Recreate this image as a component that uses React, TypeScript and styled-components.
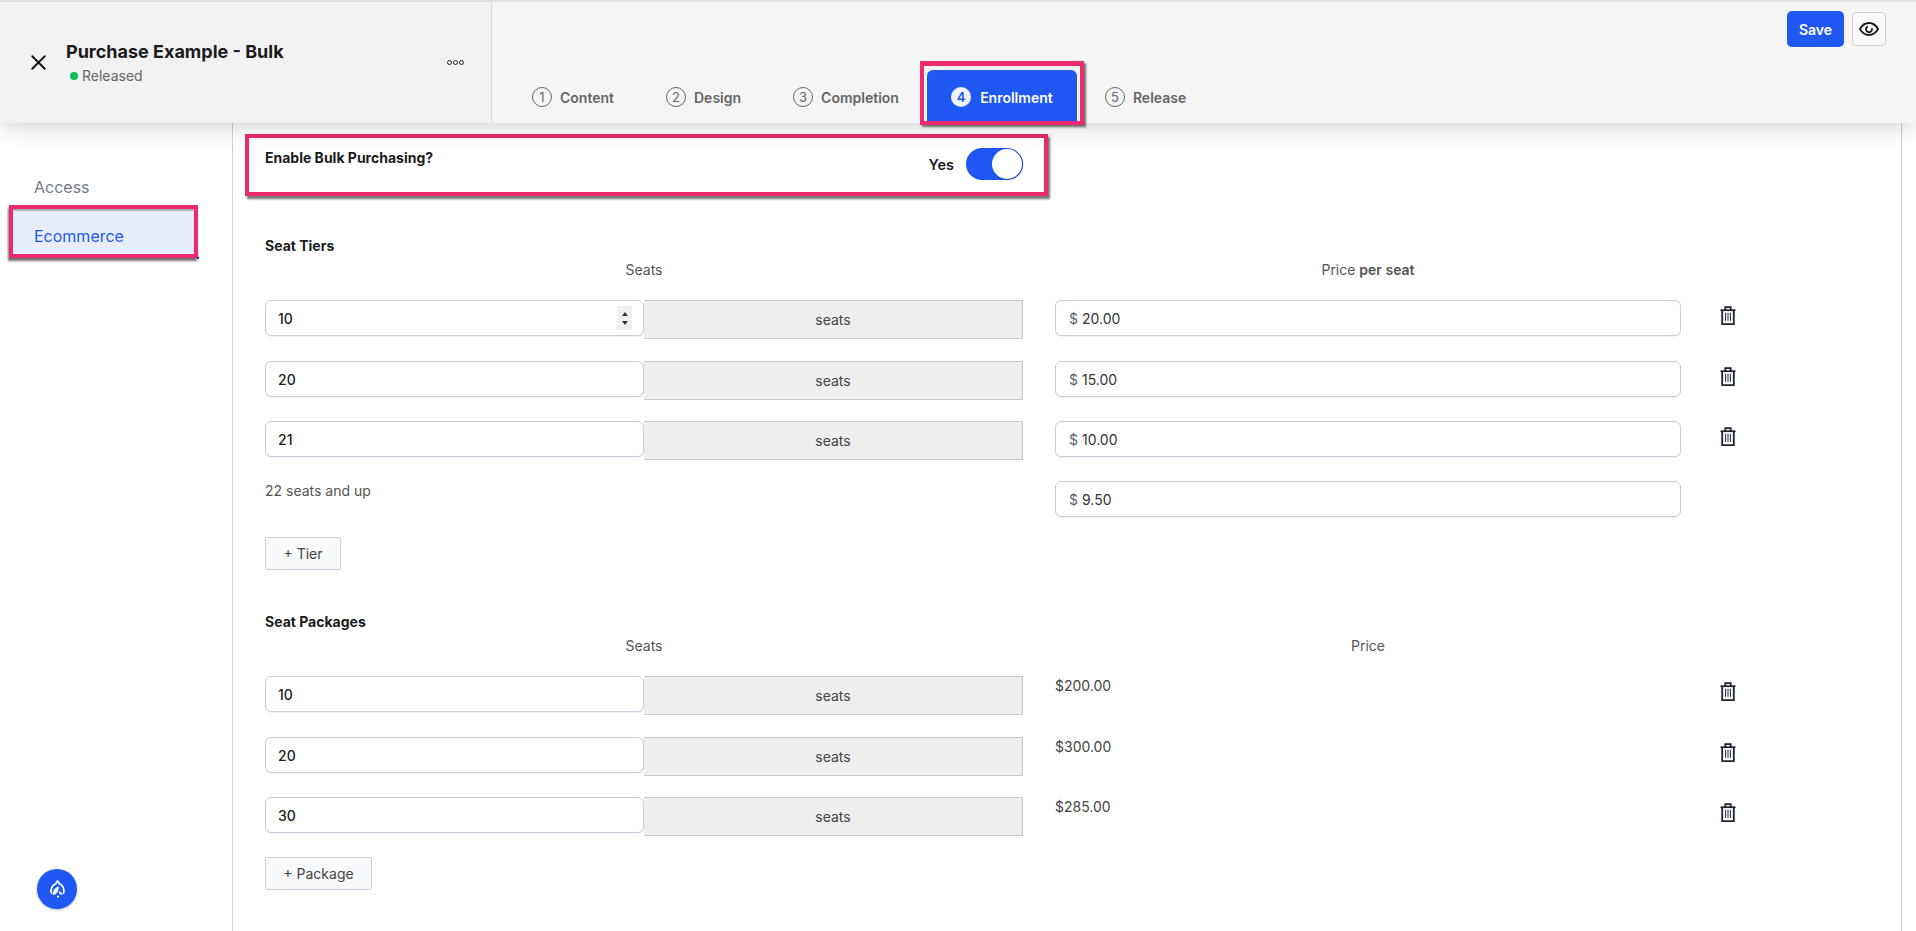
import React from 'react'
import styled, { createGlobalStyle } from 'styled-components'
import { X } from 'lucide-react'

const GlobalStyle = createGlobalStyle`
  html, body {
    margin: 0;
    padding: 0;
    height: 931px;
    overflow: hidden;
    background: #fff;
    font-family: Inter, "Liberation Sans", sans-serif;
    color: #1b1b1b;
  }
  * { box-sizing: border-box; }
`

const PINK = '#ec2a6e'
const BLUE = '#1f57f2'

const Page = styled.div`
  height: 931px;
  overflow: hidden;
  display: flex;
  flex-direction: column;
`

const Header = styled.header`
  position: relative;
  z-index: 2;
  flex: 0 0 123px;
  display: flex;
  background: #f5f5f5;
  border-top: 2px solid #e2e2e2;
  box-shadow: 0 2px 22px rgba(0, 0, 0, 0.2);
`

const TitleBlock = styled.div`
  flex: 0 0 492px;
  display: flex;
  align-items: center;
  padding: 0 26px 0 26px;
  background: #f2f2f2;
  border-right: 1px solid #d6d6d6;
`

const CloseButton = styled.div`
  display: flex;
  width: 25px;
  color: #111;
  margin-right: 15px;
`

const TitleText = styled.div`
  flex: 1;
  padding-top: 1px;
`

const CourseName = styled.div`
  font-size: 18px;
  font-weight: 700;
  line-height: 24px;
`

const Status = styled.div`
  display: flex;
  align-items: center;
  gap: 4px;
  margin: 2px 0 0 4px;
  font-size: 14px;
  line-height: 20px;
  color: #666;
`

const StatusDot = styled.span`
  width: 8px;
  height: 8px;
  border-radius: 50%;
  background: #0fbf5b;
`

const MoreDots = styled.div`
  display: flex;
  gap: 1px;
  margin-right: 1px;
`

const MoreDot = styled.span`
  width: 5px;
  height: 5px;
  border-radius: 50%;
  border: 1px solid #222;
`

const TabArea = styled.div`
  flex: 1;
  display: flex;
  justify-content: space-between;
  padding: 9px 30px 0 0;
`

const Tabs = styled.nav`
  display: flex;
  align-items: flex-end;
  padding: 0 0 0 40px;
`

const Tab = styled.div<{ $gap: number }>`
  display: flex;
  align-items: center;
  gap: 8px;
  height: 52px;
  margin-right: ${(p) => p.$gap}px;
  font-size: 14px;
  font-weight: 600;
  color: #666;
`

const ActiveFrame = styled.div<{ $gap: number }>`
  width: 164px;
  height: 64px;
  margin-right: ${(p) => p.$gap}px;
  margin-bottom: -2px;
  padding: 4px 3px 0 3px;
  display: flex;
  background: #f5f5f5;
  border: 4px solid ${PINK};
  border-top-width: 5px;
  box-shadow: 2px 2px 2px rgba(0, 0, 0, 0.55);
`

const ActiveTab = styled.div`
  flex: 1;
  display: flex;
  align-items: center;
  justify-content: center;
  gap: 9px;
  padding-top: 3px;
  background: ${BLUE};
  border-radius: 6px 6px 0 0;
  font-size: 14px;
  font-weight: 600;
  color: #fff;
`

const StepCircle = styled.span<{ $active?: boolean }>`
  display: flex;
  align-items: center;
  justify-content: center;
  width: 20px;
  height: 20px;
  border-radius: 50%;
  font-size: 13px;
  font-weight: 400;
  border: 1.5px solid #666;
  ${(p) => p.$active && `
    border: 0;
    background: #eef3ff;
    color: ${BLUE};
    font-weight: 600;
  `}
`

const HeaderActions = styled.div`
  display: flex;
  align-items: flex-start;
  gap: 8px;
`

const SaveButton = styled.div`
  width: 57px;
  height: 36px;
  display: flex;
  align-items: center;
  justify-content: center;
  background: ${BLUE};
  border-radius: 5px;
  color: #fff;
  font-size: 14px;
  font-weight: 600;
`

const EyeButton = styled.div`
  width: 34px;
  height: 34px;
  margin-top: 1px;
  display: flex;
  align-items: center;
  justify-content: center;
  background: #f9f9f9;
  border: 1px solid #cfcfcf;
  border-radius: 4px;
  color: #1b1b1b;
`

const Body = styled.div`
  flex: 1;
  display: flex;
  min-height: 0;
`

const Sidebar = styled.aside`
  position: relative;
  flex: 0 0 233px;
  border-right: 1px solid #cfcfcf;
  padding: 46px 34px 0 9px;
`

const SideLink = styled.div`
  display: flex;
  align-items: center;
  height: 36px;
  padding-left: 25px;
  font-size: 16px;
  color: #737a86;
`

const SideLinkActive = styled.div`
  position: relative;
  display: flex;
  align-items: center;
  height: 53px;
  padding: 8px 0 0 21px;
  font-size: 16px;
  color: ${BLUE};
  background: #e7eefb;
  border: 4px solid ${PINK};
  box-shadow: -1px 3px 2px rgba(0, 0, 0, 0.55), inset 0 2px 1px rgba(0, 0, 0, 0.25);

  &::after {
    content: '';
    position: absolute;
    right: -5px;
    bottom: -5px;
    width: 2px;
    height: 2px;
    background: #12308f;
  }
`

const HelpFab = styled.div`
  position: absolute;
  left: 37px;
  bottom: 22px;
  width: 40px;
  height: 40px;
  border-radius: 50%;
  background: ${BLUE};
  display: flex;
  align-items: center;
  justify-content: center;
  box-shadow: 0 1px 3px rgba(0, 0, 0, 0.25);
`

const Main = styled.main`
  flex: 0 0 1613px;
  border-right: 1px solid #cfcfcf;
  padding: 11px 165px 0 32px;
`

const ToggleRow = styled.div`
  width: 803px;
  height: 62px;
  margin-left: -20px;
  padding: 10px 21px 0 16px;
  display: flex;
  justify-content: space-between;
  background: #fff;
  border: 4px solid ${PINK};
  box-shadow: 2px 3px 2px rgba(0, 0, 0, 0.55);
`

const ToggleLabel = styled.div`
  font-size: 14px;
  font-weight: 700;
  line-height: 20px;
`

const ToggleGroup = styled.div`
  display: flex;
  align-items: center;
  gap: 12px;
  height: 32px;
  font-size: 14.5px;
  font-weight: 600;
`

const Switch = styled.div`
  width: 57px;
  height: 32px;
  border-radius: 16px;
  background: ${BLUE};
  display: flex;
  justify-content: flex-end;
  padding: 1px;
`

const SwitchKnob = styled.span`
  width: 30px;
  height: 30px;
  border-radius: 50%;
  background: #fff;
  box-shadow: 1px 1px 2px rgba(0, 0, 0, 0.3);
`

const SectionTitle = styled.div<{ $top: number }>`
  margin-top: ${(p) => p.$top}px;
  font-size: 14px;
  font-weight: 700;
  line-height: 20px;
`

const Grid = styled.div`
  display: grid;
  grid-template-columns: 758px 32px 626px 1fr;
  align-items: start;
`

const ColumnHead = styled.div<{ $price?: boolean }>`
  grid-column: ${(p) => (p.$price ? 3 : 1)};
  grid-row: 1;
  font-size: 14px;
  line-height: 20px;
  color: #555;
  text-align: center;
  height: 44px;
  padding-top: 4px;

  b {
    font-weight: 600;
  }
`

const SeatGroup = styled.div`
  grid-column: 1;
  display: flex;
  align-items: flex-start;
`

const InputShell = styled.div<{ $wide?: boolean }>`
  position: relative;
  display: flex;
  align-items: center;
  height: 36px;
  width: ${(p) => (p.$wide ? '100%' : '379px')};
  padding: 0 12px;
  background: #fff;
  border: 1px solid #c9cdd6;
  border-radius: 6px;
  box-shadow: 0 1px 1px rgba(0, 0, 0, 0.05);
  font-size: 14px;
  font-weight: 500;
  color: #1b1b1b;
`

const Dollar = styled.span`
  color: #5d6470;
  font-weight: 400;
  margin: 0 4px 0 1px;
`

const PriceValue = styled.span`
  font-weight: 400;
  color: #333;
`

const Spinner = styled.span`
  position: absolute;
  right: 11px;
  top: 5px;
  width: 15px;
  height: 24px;
  background: #efefef;
  display: flex;
  flex-direction: column;
  align-items: center;
  justify-content: center;
  gap: 5px;
`

const SpinArrow = styled.span<{ $down?: boolean }>`
  width: 0;
  height: 0;
  border-left: 3px solid transparent;
  border-right: 3px solid transparent;
  ${(p) => (p.$down ? 'border-top: 4px solid #333;' : 'border-bottom: 4px solid #333;')}
`

const Addon = styled.div`
  flex: 1;
  height: 39px;
  display: flex;
  align-items: center;
  justify-content: center;
  background: #efefef;
  border: 1px solid #c9c9c9;
  border-left: 0;
  font-size: 14px;
  color: #444;
`

const PriceCell = styled.div`
  grid-column: 3;
`

const PlainPrice = styled.div`
  grid-column: 3;
  font-size: 14px;
  line-height: 20px;
  color: #444;
`

const TrashCell = styled.div`
  grid-column: 4;
  padding: 6px 0 0 39px;
  color: #1d2433;
  line-height: 0;
`

const Spacer = styled.div<{ $h: number }>`
  grid-column: 1 / -1;
  height: ${(p) => p.$h}px;
`

const SeatsAndUp = styled.div`
  grid-column: 1;
  font-size: 14px;
  line-height: 20px;
  color: #555;
`

const AddButton = styled.div<{ $top: number; $width: number }>`
  margin-top: ${(p) => p.$top}px;
  width: ${(p) => p.$width}px;
  height: 33px;
  display: flex;
  align-items: center;
  justify-content: center;
  background: #f8f9fb;
  border: 1px solid #cdd0d6;
  border-radius: 2px;
  font-size: 14px;
  color: #444;
`

const PagerStub = styled.div`
  margin: 41px 0 0 713px;
  width: 35px;
  height: 4px;
  background: #a9c2f7;
  border-radius: 3px 3px 0 0;
`

const TrashIcon = () => (
  <svg width="16" height="19" viewBox="0 0 16 19" fill="none" stroke="currentColor" strokeWidth="1.8">
    <path d="M0.5 4.2h15" />
    <path d="M5.3 4V1.2h5.4V4" />
    <path d="M2.2 4.2v13.9h11.6V4.2" />
    <path d="M5.6 6.8v8M8 6.8v8M10.4 6.8v8" strokeWidth="1" />
  </svg>
)

const EyeIcon = () => (
  <svg width="20" height="14" viewBox="0 0 20 14" fill="none" stroke="currentColor" strokeWidth="1.8" strokeLinecap="round">
    <path d="M1 7C3.2 3 6.3 1 10 1s6.8 2 9 6c-2.2 4-5.3 6-9 6S3.2 11 1 7Z" />
    <path d="M8.2 4.8A3 3 0 1 0 13 7" />
  </svg>
)

const RocketLogo = () => (
  <svg width="19" height="20" viewBox="0 0 20 20" fill="none">
    <path d="M4 15C1.8 10.5 4.5 6 8 4.5L10 1.5 12 4.5C15.5 6 18.2 10.5 16 15" stroke="#fff" strokeWidth="1.8" />
    <path d="M11.5 7C7.5 8 4.5 12 5.2 16.5 9 15.5 11.5 12 11.5 7Z" fill="#fff" />
    <path d="M11.5 11.5 16 16 12 15.5Z" fill="#fff" />
    <circle cx="10.5" cy="18" r="1.2" fill="#fff" />
  </svg>
)

const steps = ['Content', 'Design', 'Completion', 'Enrollment', 'Release']
const stepGaps = [52, 52, 21, 21, 0]

const tiers = [
  { seats: '10', price: '20.00' },
  { seats: '20', price: '15.00' },
  { seats: '21', price: '10.00' },
]

const packages = [
  { seats: '10', price: '$200.00' },
  { seats: '20', price: '$300.00' },
  { seats: '30', price: '$285.00' },
]

const SeatField: React.FC<{ value: string; spinner?: boolean }> = ({ value, spinner }) => (
  <SeatGroup>
    <InputShell>
      {value}
      {spinner && (
        <Spinner>
          <SpinArrow />
          <SpinArrow $down />
        </Spinner>
      )}
    </InputShell>
    <Addon>seats</Addon>
  </SeatGroup>
)

export default function App() {
  return (
    <Page>
      <GlobalStyle />
      <Header>
        <TitleBlock>
          <CloseButton>
            <X size={25} strokeWidth={1.8} />
          </CloseButton>
          <TitleText>
            <CourseName>Purchase Example - Bulk</CourseName>
            <Status>
              <StatusDot />
              Released
            </Status>
          </TitleText>
          <MoreDots>
            <MoreDot />
            <MoreDot />
            <MoreDot />
          </MoreDots>
        </TitleBlock>
        <TabArea>
          <Tabs>
            {steps.map((name, i) =>
              name === 'Enrollment' ? (
                <ActiveFrame key={name} $gap={stepGaps[i]}>
                  <ActiveTab>
                    <StepCircle $active>{i + 1}</StepCircle>
                    {name}
                  </ActiveTab>
                </ActiveFrame>
              ) : (
                <Tab key={name} $gap={stepGaps[i]}>
                  <StepCircle>{i + 1}</StepCircle>
                  {name}
                </Tab>
              )
            )}
          </Tabs>
          <HeaderActions>
            <SaveButton>Save</SaveButton>
            <EyeButton>
              <EyeIcon />
            </EyeButton>
          </HeaderActions>
        </TabArea>
      </Header>
      <Body>
        <Sidebar>
          <SideLink>Access</SideLink>
          <SideLinkActive>Ecommerce</SideLinkActive>
          <HelpFab>
            <RocketLogo />
          </HelpFab>
        </Sidebar>
        <Main>
          <ToggleRow>
            <ToggleLabel>Enable Bulk Purchasing?</ToggleLabel>
            <ToggleGroup>
              Yes
              <Switch>
                <SwitchKnob />
              </Switch>
            </ToggleGroup>
          </ToggleRow>

          <SectionTitle $top={40}>Seat Tiers</SectionTitle>
          <Grid>
            <ColumnHead>Seats</ColumnHead>
            <ColumnHead $price>
              Price <b>per seat</b>
            </ColumnHead>
            {tiers.map((t, i) => (
              <React.Fragment key={t.seats}>
                <SeatField value={t.seats} spinner={i === 0} />
                <PriceCell>
                  <InputShell $wide>
                    <Dollar>$</Dollar>
                    <PriceValue>{t.price}</PriceValue>
                  </InputShell>
                </PriceCell>
                <TrashCell>
                  <TrashIcon />
                </TrashCell>
                <Spacer $h={i === 0 ? 22 : 21} />
              </React.Fragment>
            ))}
            <SeatsAndUp>22 seats and up</SeatsAndUp>
            <PriceCell>
              <InputShell $wide>
                <Dollar>$</Dollar>
                <PriceValue>9.50</PriceValue>
              </InputShell>
            </PriceCell>
          </Grid>
          <AddButton $top={20} $width={76}>+ Tier</AddButton>

          <SectionTitle $top={42}>Seat Packages</SectionTitle>
          <Grid>
            <ColumnHead>Seats</ColumnHead>
            <ColumnHead $price>Price</ColumnHead>
            {packages.map((p, i) => (
              <React.Fragment key={p.seats}>
                <SeatField value={p.seats} />
                <PlainPrice>{p.price}</PlainPrice>
                <TrashCell>
                  <TrashIcon />
                </TrashCell>
                <Spacer $h={i === 0 ? 22 : 21} />
              </React.Fragment>
            ))}
          </Grid>
          <AddButton $top={0} $width={107}>+ Package</AddButton>
          <PagerStub />
        </Main>
      </Body>
    </Page>
  )
}
